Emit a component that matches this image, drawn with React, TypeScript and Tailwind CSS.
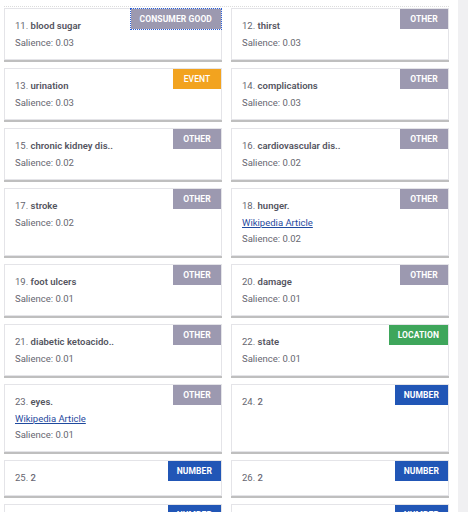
type Item = {
  n: number
  name: string
  type: string
  salience?: string
  wiki?: boolean
  focus?: boolean
}

const items: Item[] = [
  { n: 11, name: 'blood sugar', type: 'CONSUMER GOOD', salience: '0.03', focus: true },
  { n: 12, name: 'thirst', type: 'OTHER', salience: '0.03' },
  { n: 13, name: 'urination', type: 'EVENT', salience: '0.03' },
  { n: 14, name: 'complications', type: 'OTHER', salience: '0.03' },
  { n: 15, name: 'chronic kidney dis..', type: 'OTHER', salience: '0.02' },
  { n: 16, name: 'cardiovascular dis..', type: 'OTHER', salience: '0.02' },
  { n: 17, name: 'stroke', type: 'OTHER', salience: '0.02' },
  { n: 18, name: 'hunger.', type: 'OTHER', salience: '0.02', wiki: true },
  { n: 19, name: 'foot ulcers', type: 'OTHER', salience: '0.01' },
  { n: 20, name: 'damage', type: 'OTHER', salience: '0.01' },
  { n: 21, name: 'diabetic ketoacido..', type: 'OTHER', salience: '0.01' },
  { n: 22, name: 'state', type: 'LOCATION', salience: '0.01' },
  { n: 23, name: 'eyes.', type: 'OTHER', salience: '0.01', wiki: true },
  { n: 24, name: '2', type: 'NUMBER' },
  { n: 25, name: '2', type: 'NUMBER' },
  { n: 26, name: '2', type: 'NUMBER' },
  { n: 27, name: '2', type: 'NUMBER' },
  { n: 28, name: '2', type: 'NUMBER' }
]

function badgeClass (type: string): string {
  if (type === 'EVENT') return 'bg-[#f2a31f] font-medium'
  if (type === 'LOCATION') return 'bg-[#3ea65b] font-bold'
  if (type === 'NUMBER') return 'bg-[#2156b6] font-bold'
  return 'bg-[#9c99b0] font-bold'
}

function Card ({ item }: { item: Item }): JSX.Element {
  const nameClass = item.type === 'NUMBER' ? 'font-medium text-[#6a6a74]' : 'font-semibold text-[#55555f]'
  return (
    <div className="relative bg-white border border-[#e4e4e8] shadow-[0_2px_0_rgba(0,0,0,0.25)] px-[10px] pt-[8px] pb-[8px]">
      <span
        className={`absolute top-0 right-0 h-[20px] min-w-[48px] px-[9px] flex items-center justify-center text-white text-[8.5px] tracking-[0.1px] ${badgeClass(item.type)} ${item.focus ? 'outline outline-1 outline-dotted outline-[#2b5fd9]' : ''}`}
      >
        {item.type}
      </span>
      <div className="leading-[18px] text-[9.5px] text-[#666670]">
        {item.n}. <span className={nameClass}>{item.name}</span>
      </div>
      {item.wiki && (
        <div className="leading-[16px] text-[9.5px]">
          <a href="#" className="text-[#1f4a9e] underline">Wikipedia Article</a>
        </div>
      )}
      {item.salience && (
        <div className="leading-[16px] text-[9.5px] text-[#66666f]">
          Salience: {item.salience}
        </div>
      )}
    </div>
  )
}

export default function App (): JSX.Element {
  return (
    <div className="flex h-[512px] w-[468px] overflow-hidden bg-white" style={{ fontFamily: 'Roboto, "Liberation Sans", sans-serif' }}>
      <div className="w-[458px] pl-[4px] pr-[9px]">
        <div className="h-[7px] border-b border-dotted border-[#dcdcdc]" />
        <div className="grid grid-cols-2 gap-x-[9px] gap-y-[8px] pt-[1px]">
          {items.map((it) => <Card key={it.n} item={it} />)}
        </div>
      </div>
      <div className="w-[10px] bg-[#f0f0f2]" />
    </div>
  )
}
